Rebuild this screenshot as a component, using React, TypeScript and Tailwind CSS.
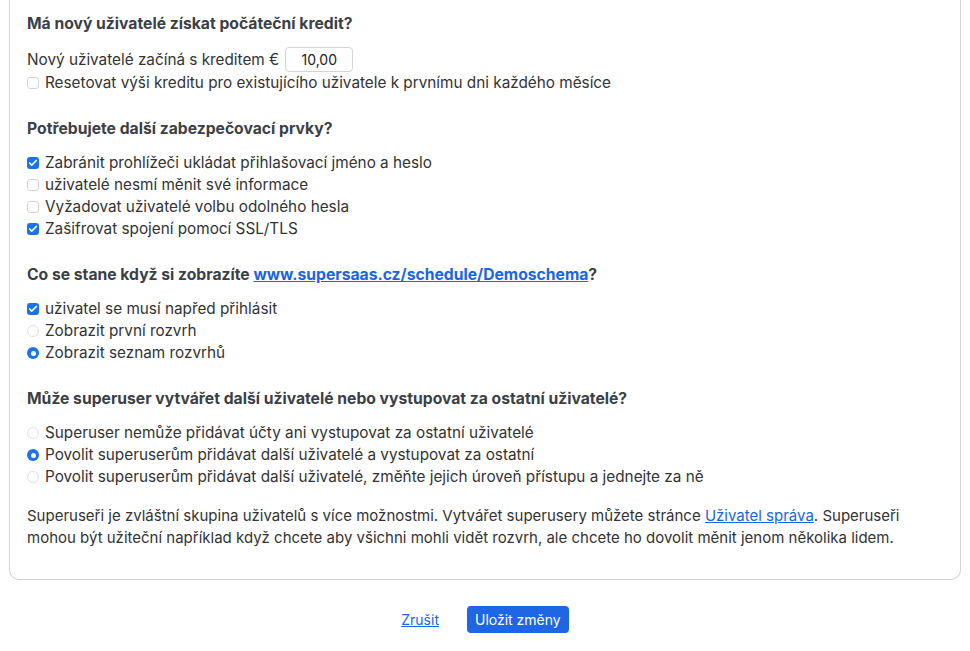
import { Check } from "lucide-react";

function CheckBox({ checked, label }: { checked?: boolean; label: string }) {
  return (
    <label className="flex items-center gap-[6px] text-[15.3px] leading-[22px]">
      {checked ? (
        <span className="flex h-[12px] w-[12px] shrink-0 items-center justify-center rounded-[3px] bg-[#1a73e8]">
          <Check className="h-[10px] w-[10px] text-white" strokeWidth={4} />
        </span>
      ) : (
        <span className="h-[12px] w-[12px] shrink-0 rounded-[3px] border border-[#d4d4d8] bg-white" />
      )}
      <span>{label}</span>
    </label>
  );
}

function Radio({ checked, label }: { checked?: boolean; label: string }) {
  return (
    <label className="flex items-center gap-[6px] text-[15.3px] leading-[22px]">
      {checked ? (
        <span className="flex h-[12px] w-[12px] shrink-0 items-center justify-center rounded-full bg-[#1a73e8]">
          <span className="h-[5px] w-[5px] rounded-full bg-white" />
        </span>
      ) : (
        <span className="h-[12px] w-[12px] shrink-0 rounded-full border border-[#e0e0e3] bg-white" />
      )}
      <span>{label}</span>
    </label>
  );
}

function Section({ title, children }: { title: React.ReactNode; children: React.ReactNode }) {
  return (
    <div className="mb-6">
      <h2 className="mb-3 text-[15.7px] font-bold leading-[22px] text-[#3b3f46]">{title}</h2>
      <div>{children}</div>
    </div>
  );
}

export default function App() {
  return (
    <div className="min-h-[651px] bg-white text-[15px] text-[#333] [font-family:Inter,'Liberation_Sans',Arial,sans-serif]">
      <div className="mx-[9px] rounded-b-[10px] border-x border-b border-[#d4d4d8] px-[17px] pb-[30px] pt-[13px]">
        <Section title="Má nový uživatelé získat počáteční kredit?">
          <div className="flex items-center text-[15.3px] leading-[22px]">
            <span>Nový uživatelé začíná s kreditem €</span>
            <input
              readOnly
              value="10,00"
              className="ml-[6px] h-[25px] w-[68px] rounded-[4px] border border-[#d4d4d8] text-center text-[14px] text-[#222] outline-none"
            />
          </div>
          <CheckBox label="Resetovat výši kreditu pro existujícího uživatele k prvnímu dni každého měsíce" />
        </Section>

        <Section title="Potřebujete další zabezpečovací prvky?">
          <CheckBox checked label="Zabránit prohlížeči ukládat přihlašovací jméno a heslo" />
          <CheckBox label="uživatelé nesmí měnit své informace" />
          <CheckBox label="Vyžadovat uživatelé volbu odolného hesla" />
          <CheckBox checked label="Zašifrovat spojení pomocí SSL/TLS" />
        </Section>

        <Section
          title={
            <>
              Co se stane když si zobrazíte{" "}
              <a href="#" className="text-[#1a66e0] underline">
                www.supersaas.cz/schedule/Demoschema
              </a>
              ?
            </>
          }
        >
          <CheckBox checked label="uživatel se musí napřed přihlásit" />
          <Radio label="Zobrazit první rozvrh" />
          <Radio checked label="Zobrazit seznam rozvrhů" />
        </Section>

        <Section title="Může superuser vytvářet další uživatelé nebo vystupovat za ostatní uživatelé?">
          <Radio label="Superuser nemůže přidávat účty ani vystupovat za ostatní uživatelé" />
          <Radio checked label="Povolit superuserům přidávat další uživatelé a vystupovat za ostatní" />
          <Radio label="Povolit superuserům přidávat další uživatelé, změňte jejich úroveň přístupu a jednejte za ně" />
        </Section>

        <p className="-mt-[7px] leading-[22px]">
          Superuseři je zvláštní skupina uživatelů s více možnostmi. Vytvářet superusery můžete stránce{" "}
          <a href="#" className="text-[#1a66e0] underline">
            Uživatel správa
          </a>
          . Superuseři mohou být užiteční například když chcete aby všichni mohli vidět rozvrh, ale chcete ho dovolit
          měnit jenom několika lidem.
        </p>
      </div>

      <div className="mt-[26px] flex items-center justify-center gap-[28px]">
        <a href="#" className="text-[14px] text-[#1a66e0] underline">
          Zrušit
        </a>
        <button className="h-[27px] rounded-[4px] bg-[#1f66e5] px-[8px] text-[14px] text-white">Uložit změny</button>
      </div>
    </div>
  );
}
